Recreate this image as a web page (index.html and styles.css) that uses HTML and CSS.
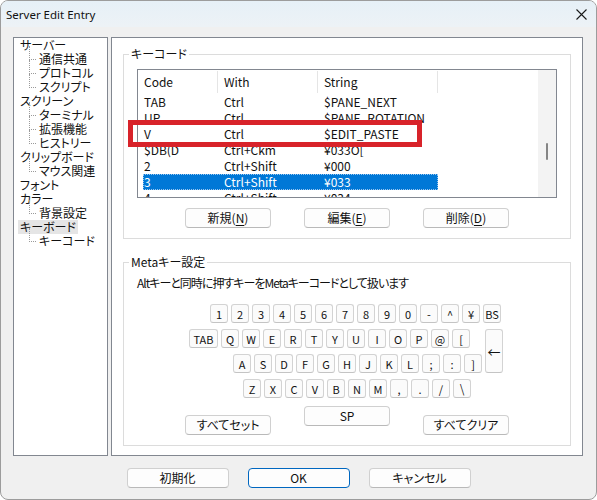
FILE: index.html
```
<!DOCTYPE html>
<html lang="ja">
<head>
    <meta charset="UTF-8">
    <title>Server Edit Entry</title>
    <link rel="stylesheet" href="styles.css">
</head>
<body>
    <div class="window">
        <div class="titlebar">
            <span class="title">Server Edit Entry</span>
            <svg class="close" width="11" height="11" viewBox="0 0 11 11">
                <path d="M0.5 0.5 L10.5 10.5 M10.5 0.5 L0.5 10.5" stroke="#1a1a1a" stroke-width="1.1" fill="none"/>
            </svg>
        </div>

        <div class="content">
            <ul class="tree">
                <li>サーバー</li>
                <li class="sub">通信共通</li>
                <li class="sub">プロトコル</li>
                <li class="sub">スクリプト</li>
                <li>スクリーン</li>
                <li class="sub">ターミナル</li>
                <li class="sub">拡張機能</li>
                <li class="sub">ヒストリー</li>
                <li>クリップボード</li>
                <li class="sub">マウス関連</li>
                <li>フォント</li>
                <li>カラー</li>
                <li class="sub">背景設定</li>
                <li class="selected">キーボード</li>
                <li class="sub">キーコード</li>
            </ul>

            <div class="panel">
                <fieldset class="group group-keycode">
                    <legend>キーコード</legend>
                    <div class="list-wrap">
                        <div class="list">
                            <div class="list-body">
                                <div class="list-head">
                                    <span>Code</span><span>With</span><span>String</span>
                                </div>
                                <div class="list-row"><span>TAB</span><span>Ctrl</span><span>$PANE_NEXT</span></div>
                                <div class="list-row"><span>UP</span><span>Ctrl</span><span>$PANE_ROTATION</span></div>
                                <div class="list-row"><span>V</span><span>Ctrl</span><span>$EDIT_PASTE</span></div>
                                <div class="list-row"><span>$DB(D</span><span>Ctrl+Ckm</span><span>¥033O[</span></div>
                                <div class="list-row"><span>2</span><span>Ctrl+Shift</span><span>¥000</span></div>
                                <div class="list-row selected"><span>3</span><span>Ctrl+Shift</span><span>¥033</span></div>
                                <div class="list-row"><span>4</span><span>Ctrl+Shift</span><span>¥034</span></div>
                            </div>
                            <div class="scroll"><div class="thumb"></div></div>
                        </div>
                        <div class="mark"></div>
                    </div>
                    <div class="btn-row">
                        <button class="btn">新規(<u>N</u>)</button>
                        <button class="btn">編集(<u>E</u>)</button>
                        <button class="btn">削除(<u>D</u>)</button>
                    </div>
                </fieldset>

                <fieldset class="group group-meta">
                    <legend>Metaキー設定</legend>
                    <p class="desc">Altキーと同時に押すキーをMetaキーコードとして扱います</p>
                    <div class="keyboard">
                        <div class="kb-row row-num">
                            <span class="key">1</span><span class="key">2</span><span class="key">3</span><span class="key">4</span><span class="key">5</span><span class="key">6</span><span class="key">7</span><span class="key">8</span><span class="key">9</span><span class="key">0</span><span class="key">-</span><span class="key">^</span><span class="key">¥</span><span class="key">BS</span>
                        </div>
                        <div class="kb-mid">
                            <div class="kb-col">
                                <div class="kb-row">
                                    <span class="key wide">TAB</span><span class="key">Q</span><span class="key">W</span><span class="key">E</span><span class="key">R</span><span class="key">T</span><span class="key">Y</span><span class="key">U</span><span class="key">I</span><span class="key">O</span><span class="key">P</span><span class="key">@</span><span class="key">[</span>
                                </div>
                                <div class="kb-row row-home">
                                    <span class="key">A</span><span class="key">S</span><span class="key">D</span><span class="key">F</span><span class="key">G</span><span class="key">H</span><span class="key">J</span><span class="key">K</span><span class="key">L</span><span class="key">;</span><span class="key">:</span><span class="key">]</span>
                                </div>
                            </div>
                            <span class="key enter">←</span>
                        </div>
                        <div class="kb-row row-bottom">
                            <span class="key">Z</span><span class="key">X</span><span class="key">C</span><span class="key">V</span><span class="key">B</span><span class="key">N</span><span class="key">M</span><span class="key">,</span><span class="key">.</span><span class="key">/</span><span class="key slash">\</span>
                        </div>
                    </div>
                    <div class="btn-row kb-actions">
                        <button class="btn low">すべてセット</button>
                        <button class="btn">SP</button>
                        <button class="btn low">すべてクリア</button>
                    </div>
                </fieldset>
            </div>
        </div>

        <div class="footer">
            <button class="btn">初期化</button>
            <button class="btn default">OK</button>
            <button class="btn">キャンセル</button>
        </div>
    </div>
</body>
</html>
```

FILE: styles.css
```
:root {
    --frame: #828790;
    --group-line: #dcdcdc;
    --btn-line: #d0d0d0;
    --select: #0078d7;
    --mark: #d8232a;
}

* {
    box-sizing: border-box;
}

body {
    margin: 0;
    background: #ffffff;
    font-family: "Noto Sans CJK JP", "Noto Sans", sans-serif;
    font-size: 12px;
    font-feature-settings: "palt" 1;
    color: #111;
}

.window {
    width: 597px;
    height: 500px;
    border: 1px solid #9c9c9c;
    border-radius: 8px;
    background: #f0f0f0;
    overflow: hidden;
    display: flex;
    flex-direction: column;
}

.titlebar {
    height: 26px;
    flex: none;
    display: flex;
    align-items: center;
    justify-content: space-between;
    padding: 0 9px 0 5px;
    background: linear-gradient(#e6f0f7, #edf2f6);
}

.title {
    font-family: "Noto Sans", sans-serif;
    font-size: 11.5px;
}

.content {
    display: flex;
    gap: 3px;
    padding: 10px 13px 0 12px;
}

/* tree */
.tree {
    width: 95px;
    height: 419px;
    margin: 0;
    padding: 0 0 0 4px;
    list-style: none;
    background: #fff;
    border: 1px solid var(--frame);
}

.tree li {
    position: relative;
    width: fit-content;
    height: 14px;
    line-height: 14px;
    padding: 0 2px;
    white-space: nowrap;
}

.tree li.sub {
    padding-left: 21px;
}

.tree li.sub::before {
    content: "";
    position: absolute;
    left: 11px;
    top: -6px;
    width: 6px;
    height: 13px;
    border-left: 1px dotted #9a9a9a;
    border-bottom: 1px dotted #9a9a9a;
}

.tree li.selected {
    background: #e5e5e5;
}

/* right panel */
.panel {
    flex: 1;
    height: 419px;
    background: #fff;
    border: 1px solid var(--frame);
    padding: 0 11px;
}

.group {
    margin: 0;
    min-width: 0;
    border: 1px solid var(--group-line);
    padding: 8px 13px 10px;
}

.group legend {
    margin-left: -8px;
    padding: 0 2px;
    line-height: 14px;
}

.group-keycode {
    margin-top: 9px;
}

.group-meta {
    margin-top: 16px;
    padding-top: 7px;
}

/* list view */
.list-wrap {
    position: relative;
}

.list {
    height: 129px;
    border: 1px solid var(--frame);
    display: flex;
    overflow: hidden;
}

.list-body {
    flex: 1;
    overflow: hidden;
}

.list-head {
    display: grid;
    grid-template-columns: 80px 100px 120px;
    height: 24px;
}

.list-head span {
    padding-left: 6px;
    border-right: 1px solid #e5e5e5;
    height: 22px;
    margin-top: 1px;
    line-height: 22px;
}

.list-row {
    display: grid;
    grid-template-columns: 75px 100px 120px;
    width: 295px;
    margin-left: 5px;
    height: 16px;
    line-height: 16px;
    white-space: nowrap;
}

.list-row span {
    padding-left: 6px;
    overflow: hidden;
}

.list-row span:first-child {
    padding-left: 1px;
}

.list-row.selected {
    background: var(--select);
    color: #fff;
    outline: 1px dotted #9cc6ee;
    outline-offset: -1px;
}

.scroll {
    width: 18px;
    background: #f3f3f3;
}

.thumb {
    width: 2px;
    height: 17px;
    margin: 73px auto 0;
    background: #858585;
    border-radius: 1px;
}

.mark {
    position: absolute;
    left: -9px;
    top: 51px;
    width: 294px;
    height: 27px;
    border: 5px solid var(--mark);
}

/* buttons */
.btn-row {
    display: flex;
    justify-content: center;
    gap: 33px;
    margin-top: 10px;
}

.btn {
    width: 86px;
    height: 20px;
    padding: 0;
    font: inherit;
    line-height: 18px;
    color: #111;
    background: #fdfdfd;
    border: 1px solid var(--btn-line);
    border-bottom-color: #b9b9b9;
    border-radius: 4px;
}

.btn u {
    text-underline-offset: 2px;
}

/* meta keys */
.desc {
    margin: 0;
    line-height: 14px;
    letter-spacing: -1px;
}

.keyboard {
    margin-top: 14px;
    padding-left: 52px;
    display: flex;
    flex-direction: column;
    gap: 6px;
}

.kb-row {
    display: flex;
    gap: 3px;
}

.row-num {
    margin-left: 21px;
}

.row-home {
    margin-left: 44px;
}

.row-bottom {
    margin-left: 54px;
}

.kb-mid {
    display: flex;
    gap: 3px;
}

.kb-col {
    display: flex;
    flex-direction: column;
    gap: 6px;
}

.key {
    width: 18px;
    height: 19px;
    display: flex;
    align-items: center;
    justify-content: center;
    font-size: 11px;
    background: #fbfbfb;
    border: 1px solid #d3d3d3;
    border-bottom-color: #c4c4c4;
    border-radius: 3px;
}

.key.wide {
    width: 29px;
}

.key.enter {
    height: 44px;
    font-size: 13px;
}

.key.slash {
    font-family: "DejaVu Sans", sans-serif;
    font-size: 14px;
    font-weight: 300;
}

.kb-actions {
    align-items: flex-start;
    margin-top: 8px;
}

.kb-actions .btn.low {
    margin-top: 9px;
}

/* footer */
.footer {
    display: flex;
    justify-content: center;
    gap: 19px;
    padding-top: 12px;
}

.footer .btn {
    width: 102px;
}

.footer .btn.default {
    border-color: #0067c0;
}
```
